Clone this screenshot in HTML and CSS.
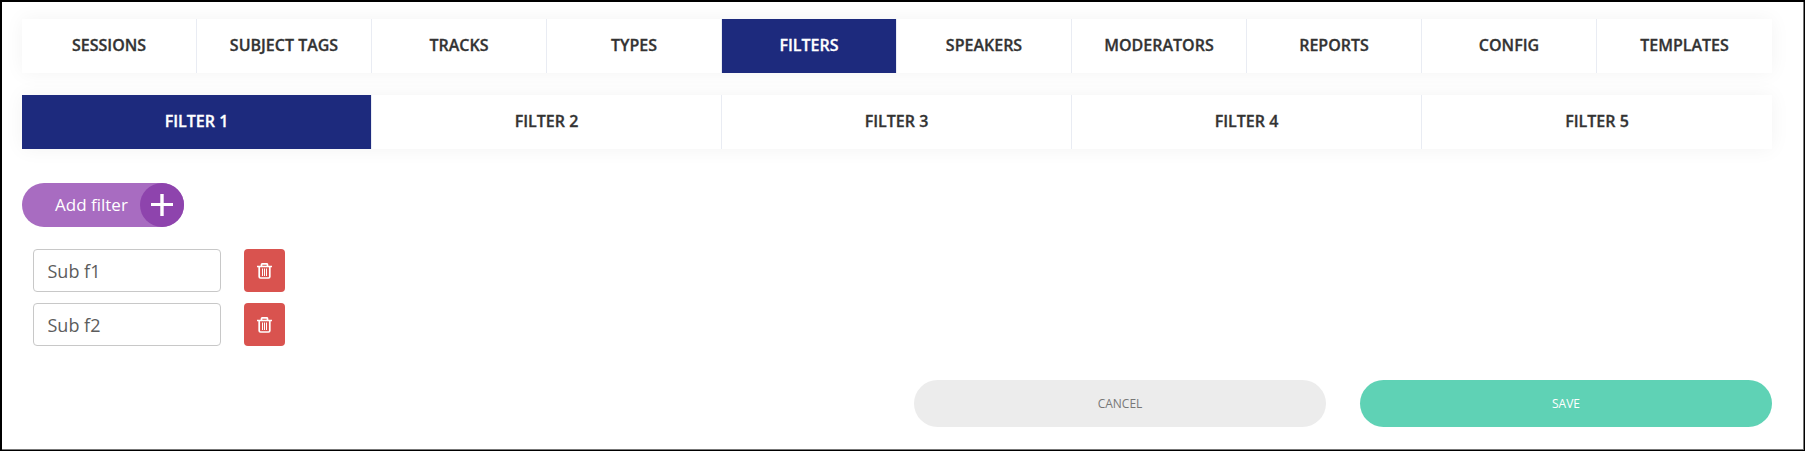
FILE: index.html
```
<!DOCTYPE html>
<html lang="en">
<head>
  <meta charset="UTF-8">
  <meta name="viewport" content="width=device-width, initial-scale=1.0">
  <title>Filters</title>
  <link rel="stylesheet" href="styles.css">
</head>
<body>
  <main class="page">
    <nav class="tabs">
      <a class="tab">Sessions</a>
      <a class="tab">Subject Tags</a>
      <a class="tab">Tracks</a>
      <a class="tab">Types</a>
      <a class="tab active">Filters</a>
      <a class="tab">Speakers</a>
      <a class="tab">Moderators</a>
      <a class="tab">Reports</a>
      <a class="tab">Config</a>
      <a class="tab">Templates</a>
    </nav>

    <nav class="tabs">
      <a class="tab active">Filter 1</a>
      <a class="tab">Filter 2</a>
      <a class="tab">Filter 3</a>
      <a class="tab">Filter 4</a>
      <a class="tab">Filter 5</a>
    </nav>

    <button class="add-filter" type="button">
      <span class="add-label">Add filter</span>
      <span class="add-icon">
        <svg width="22" height="22" viewBox="0 0 22 22"><path d="M0 9h9.3V0h3.4v9H22v3h-9.3v10H9.3V12H0z" fill="#fff"/></svg>
      </span>
    </button>

    <form class="filters">
      <div class="filter-row">
        <input class="filter-input" type="text" value="Sub f1">
        <button class="delete" type="button" aria-label="Delete">
          <svg width="15" height="16" viewBox="0 0 15 16" fill="none" stroke="#fff"><path d="M0 3.500h15M4.500 3V1.800q0-1 1-1h4q1 0 1 1V3M2.200 3.500v10.200q0 1.300 1.300 1.300h8q1.300 0 1.300-1.300V3.500" stroke-width="1.700"/><path d="M5.500 5.500v7.500M7.500 5.500v7.500M9.500 5.500v7.500"/></svg>
        </button>
      </div>
      <div class="filter-row">
        <input class="filter-input" type="text" value="Sub f2">
        <button class="delete" type="button" aria-label="Delete">
          <svg width="15" height="16" viewBox="0 0 15 16" fill="none" stroke="#fff"><path d="M0 3.500h15M4.500 3V1.800q0-1 1-1h4q1 0 1 1V3M2.200 3.500v10.200q0 1.300 1.300 1.300h8q1.300 0 1.300-1.300V3.500" stroke-width="1.700"/><path d="M5.500 5.500v7.500M7.500 5.500v7.500M9.500 5.500v7.500"/></svg>
        </button>
      </div>
    </form>

    <div class="actions">
      <button class="btn cancel" type="button">Cancel</button>
      <button class="btn save" type="button">Save</button>
    </div>
  </main>
</body>
</html>
```
FILE: styles.css
```
* {
  box-sizing: border-box;
}

body {
  margin: 0;
  font-family: "Open Sans", sans-serif;
  background-color: #fff;
  color: #333;
}

button, input {
  font-family: inherit;
  border: none;
  padding: 0;
}

.page {
  height: 451px;
  padding: 17px 32px 0 20px;
  border: 2px solid #000;
  border-right-width: 1px;
  border-bottom-width: 1px;
  box-shadow: inset -1px -1px 0 #777;
  overflow: hidden;
}

.tabs {
  display: grid;
  grid-auto-flow: column;
  grid-auto-columns: 1fr;
  width: 1750px;
  height: 54px;
  margin-bottom: 22px;
  background-color: #fff;
  box-shadow: 0 0 20px rgba(0, 0, 0, 0.05);
}

.tab {
  border-right: 1px solid #e9ecf3;
  font-size: 16px;
  font-weight: 600;
  line-height: 52px;
  text-align: center;
  text-transform: uppercase;
  background-clip: padding-box;
  -webkit-text-stroke: 0.3px;
}

.tab:last-child {
  border-right: none;
}

.tab.active {
  background-color: #1d2a7d;
  color: #fff;
}

.add-filter {
  display: flex;
  align-items: center;
  justify-content: space-between;
  width: 162px;
  height: 44px;
  margin-top: 34px;
  padding-left: 33px;
  border-radius: 22px;
  background-color: #a86cc1;
  color: #fff;
  font-size: 17px;
}

.add-label {
  padding-bottom: 2px;
}

.add-icon {
  display: flex;
  align-items: center;
  justify-content: center;
  width: 44px;
  height: 44px;
  border-radius: 50%;
  background-color: #8e44ad;
}

.filters {
  display: flex;
  flex-direction: column;
  gap: 11px;
  margin: 22px 0 0 11px;
}

.filter-row {
  display: flex;
  gap: 23px;
  height: 43px;
}

.filter-input {
  width: 188px;
  padding: 0 13.5px;
  border: 1px solid #c8c8c8;
  border-radius: 4px;
  color: #5c5c5c;
  font-size: 18px;
}

.delete {
  display: flex;
  align-items: center;
  justify-content: center;
  width: 41px;
  border-radius: 4px;
  background-color: #d9534f;
}

.actions {
  display: flex;
  justify-content: flex-end;
  gap: 34px;
  width: 1750px;
  margin-top: 34px;
}

.btn {
  width: 412px;
  height: 47px;
  border-radius: 24px;
  font-size: 12px;
  text-transform: uppercase;
}

.cancel {
  background-color: #ececec;
  color: #777;
}

.save {
  background-color: #5fd2b5;
  color: #fff;
}
```
